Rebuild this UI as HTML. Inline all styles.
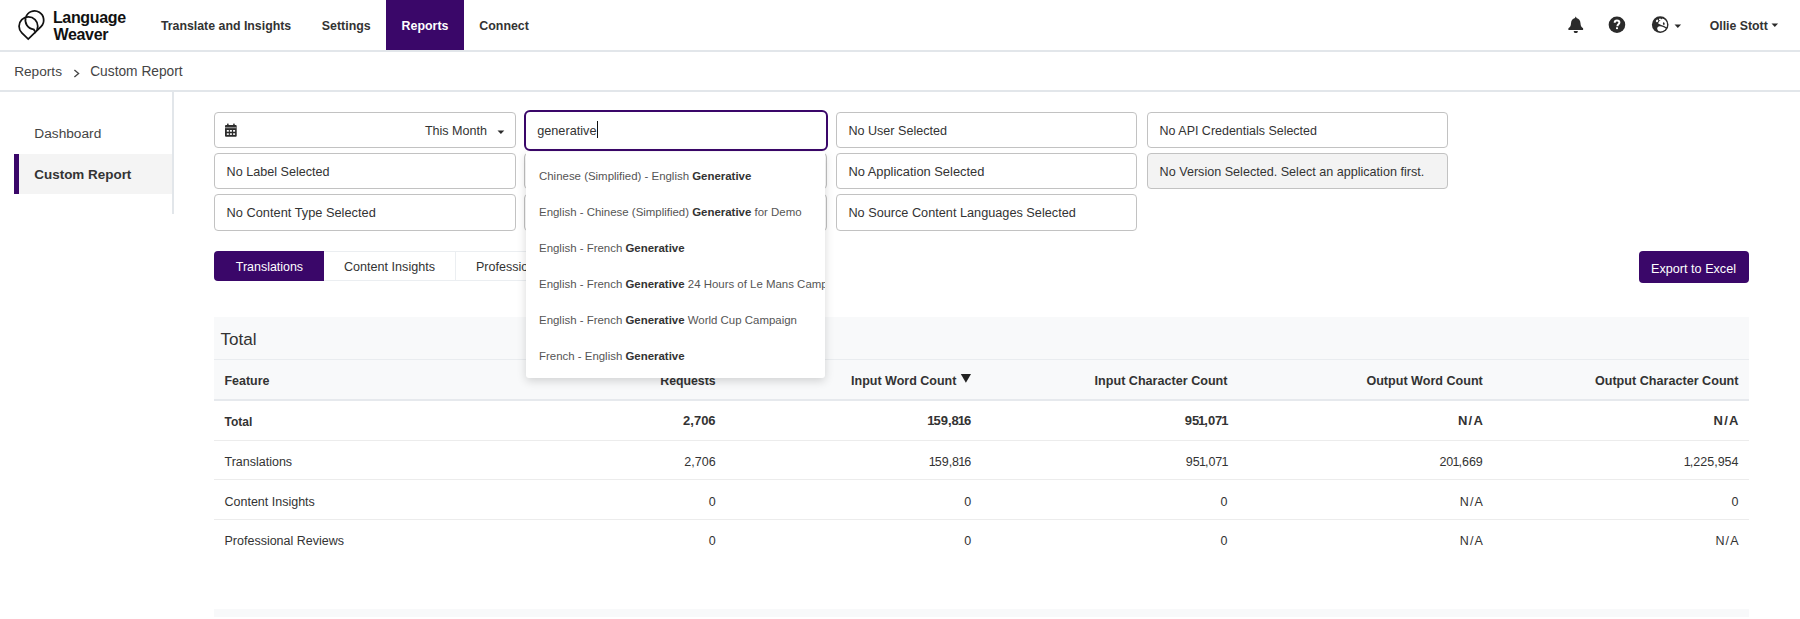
<!DOCTYPE html>
<html><head><meta charset="utf-8"><title>Custom Report</title>
<style>
html,body{margin:0;padding:0;background:#fff;width:1800px;height:619px;overflow:hidden;position:relative}
body{font-family:"Liberation Sans",sans-serif}
.t{position:absolute;white-space:pre;line-height:20px}
b{font-weight:700}
</style></head><body>
<div style="position:absolute;left:0px;top:50px;width:1800px;height:2px;background:#e2e6ea"></div>
<svg style="position:absolute;left:0;top:0" width="50" height="50" viewBox="0 0 50 50">
<g fill="none" stroke="#111" stroke-width="1.85" stroke-linejoin="miter" transform="translate(31 24.6) scale(0.955) translate(-31 -25)">
<path d="M33.9 29.9 A9.6 9.6 0 1 1 41.5 27.1 L28.1 40.1 L21.4 33.6 A9.8 9.8 0 1 1 35.2 33.6"/>
<path d="M33.6 29.6 L35.3 32.3"/>
</g></svg>
<div class="t" style="left:52.90px;top:7.55px;font-size:16.0px;font-weight:700;color:#111;letter-spacing:-0.33px;">Language</div>
<div class="t" style="left:53.50px;top:24.55px;font-size:16.0px;font-weight:700;color:#111;letter-spacing:-0.33px;">Weaver</div>
<div style="position:absolute;left:386px;top:0px;width:78px;height:50px;background:#3a0769"></div>
<div class="t" style="left:160.90px;top:15.52px;font-size:12.35px;font-weight:700;color:#333;">Translate and Insights</div>
<div class="t" style="left:321.80px;top:15.50px;font-size:12.4px;font-weight:700;color:#333;">Settings</div>
<div class="t" style="left:401.60px;top:15.50px;font-size:12.4px;font-weight:700;color:#fff;">Reports</div>
<div class="t" style="left:479.30px;top:15.70px;font-size:12.4px;font-weight:700;color:#333;">Connect</div>
<svg style="position:absolute;left:1566px;top:14px" width="20" height="22" viewBox="0 0 20 22">
<path fill="#2b2b2b" d="M9.75 2.5 C10.2 3.1 10.4 3.6 10.5 4.1 C12.9 4.6 14.3 6.6 14.5 9.3 C14.7 12.1 15.1 13.1 17.1 14.3 V15.9 H2.4 V14.3 C4.4 13.1 4.8 12.1 5.0 9.3 C5.2 6.6 6.6 4.6 9.0 4.1 C9.1 3.6 9.3 3.1 9.75 2.5z"/>
<path fill="#2b2b2b" d="M7.8 17.1 H11.8 V17.5 C11.8 18.5 10.9 19.1 9.8 19.1 C8.7 19.1 7.8 18.5 7.8 17.5z"/>
</svg>
<svg style="position:absolute;left:1607px;top:15px" width="20" height="20" viewBox="0 0 20 20">
<circle cx="9.95" cy="9.75" r="8.3" fill="#2b2b2b"/>
<path fill="none" stroke="#fff" stroke-width="2.0" d="M7.7 7.7 C7.7 6.2 8.7 5.4 9.95 5.4 C11.4 5.4 12.4 6.3 12.4 7.5 C12.4 9.3 10.4 9.2 10.4 11.2"/>
<rect x="9.0" y="12.3" width="2.0" height="1.8" fill="#fff"/>
</svg>
<svg style="position:absolute;left:1650px;top:15px" width="20" height="20" viewBox="0 0 20 20">
<defs><clipPath id="gc"><circle cx="10.2" cy="9.65" r="6.9"/></clipPath></defs>
<circle cx="10.2" cy="9.65" r="8.3" fill="#2b2b2b"/>
<g clip-path="url(#gc)" fill="#fff">
<ellipse cx="7.1" cy="5.9" rx="1.1" ry="1.3" transform="rotate(35 7.1 5.9)"/>
<ellipse cx="10.0" cy="4.4" rx="1.1" ry="0.9"/>
<path d="M8.2 8.0 C8.6 6.9 9.4 6.0 10.2 5.4 C11.0 4.7 11.6 3.9 12.4 3.6 C13.8 3.9 15.2 4.6 16.2 5.8 C17.0 7.0 17.6 8.4 17.6 10 C17.4 11.2 17.0 12.0 16.6 12.5 C15.8 11.8 15.0 11.2 14.2 10.9 C13.2 10.5 12.2 10.2 11.2 9.9 C10.2 9.6 9.2 9.2 8.6 8.8 C8.3 8.5 8.2 8.3 8.2 8.0z"/>
<path d="M7.6 12.2 C8.3 11.5 9.1 11.1 10.0 11.2 C11.0 11.3 12.1 11.6 13.1 12.1 C14.2 12.5 15.2 13.0 16.2 13.7 L15 17 C13 17.5 11 17.3 9.2 16.6 C8.2 16.0 7.6 15.2 7.3 14.3 C7.1 13.6 7.2 12.8 7.6 12.2z"/>
</g>
<path fill="#2b2b2b" d="M13.2 7.4 C13.8 7.1 14.4 7.6 14.6 8.3 C14.8 9.0 14.6 9.9 14.1 10.2 C13.5 10.2 13.2 9.7 13.0 9.0 C12.8 8.4 12.8 7.8 13.2 7.4z"/>
</svg>
<svg style="position:absolute;left:1673.5px;top:24px" width="8" height="5" viewBox="0 0 8 5"><path d="M0.5 0.4 H7.1 L3.8 3.9z" fill="#2b2b2b"/></svg>
<div class="t" style="left:1709.70px;top:16.04px;font-size:12.3px;font-weight:700;color:#333;">Ollie Stott</div>
<svg style="position:absolute;left:1770.8px;top:22.8px" width="8" height="5" viewBox="0 0 8 5"><path d="M0.5 0.4 H7.1 L3.8 3.9z" fill="#2b2b2b"/></svg>
<div style="position:absolute;left:0px;top:90px;width:1800px;height:2px;background:#e2e6ea"></div>
<div class="t" style="left:14.20px;top:61.67px;font-size:13.65px;font-weight:400;color:#444;">Reports</div>
<svg style="position:absolute;left:72px;top:67.5px" width="10" height="11" viewBox="0 0 10 11"><path d="M2.4 2.1 L6.6 5.5 L2.4 8.9" fill="none" stroke="#444" stroke-width="1.3"/></svg>
<div class="t" style="left:90.20px;top:61.63px;font-size:13.75px;font-weight:400;color:#444;">Custom Report</div>
<div style="position:absolute;left:172px;top:92px;width:2px;height:122px;background:#e2e6ea"></div>
<div style="position:absolute;left:19px;top:154px;width:153px;height:40px;background:#f4f4f4"></div>
<div style="position:absolute;left:14px;top:154px;width:5px;height:40px;background:#3a0769"></div>
<div class="t" style="left:34.30px;top:124.05px;font-size:13.7px;font-weight:400;color:#444;">Dashboard</div>
<div class="t" style="left:34.30px;top:164.64px;font-size:13.45px;font-weight:700;color:#333;">Custom Report</div>
<div style="position:absolute;left:214px;top:112px;width:302px;height:36px;box-sizing:border-box;border:1px solid #c2c2c2;border-radius:4px;background:#fff"></div>
<div style="position:absolute;left:836px;top:112px;width:301px;height:36px;box-sizing:border-box;border:1px solid #c2c2c2;border-radius:4px;background:#fff"></div>
<div style="position:absolute;left:1147px;top:112px;width:301px;height:36px;box-sizing:border-box;border:1px solid #c2c2c2;border-radius:4px;background:#fff"></div>
<div style="position:absolute;left:214px;top:153px;width:302px;height:36px;box-sizing:border-box;border:1px solid #c2c2c2;border-radius:4px;background:#fff"></div>
<div style="position:absolute;left:524px;top:153px;width:303px;height:36px;box-sizing:border-box;border:1px solid #c2c2c2;border-radius:4px;background:#fff"></div>
<div style="position:absolute;left:836px;top:153px;width:301px;height:36px;box-sizing:border-box;border:1px solid #c2c2c2;border-radius:4px;background:#fff"></div>
<div style="position:absolute;left:1147px;top:153px;width:301px;height:36px;box-sizing:border-box;border:1px solid #c2c2c2;border-radius:4px;background:#f3f3f3"></div>
<div style="position:absolute;left:214px;top:194px;width:302px;height:37px;box-sizing:border-box;border:1px solid #c2c2c2;border-radius:4px;background:#fff"></div>
<div style="position:absolute;left:524px;top:194px;width:303px;height:37px;box-sizing:border-box;border:1px solid #c2c2c2;border-radius:4px;background:#fff"></div>
<div style="position:absolute;left:836px;top:194px;width:301px;height:37px;box-sizing:border-box;border:1px solid #c2c2c2;border-radius:4px;background:#fff"></div>
<div style="position:absolute;left:524px;top:110px;width:303.5px;height:40.5px;box-sizing:border-box;border:2px solid #3a0769;border-radius:6px;background:#fff"></div>
<svg style="position:absolute;left:224px;top:122px" width="14" height="16" viewBox="0 0 14 16">
<rect x="1" y="3.0" width="11.7" height="11.7" rx="1" fill="#2b2b2b"/>
<rect x="3.1" y="1.6" width="1.5" height="2.2" rx="0.5" fill="#2b2b2b"/><rect x="9.2" y="1.6" width="1.5" height="2.2" rx="0.5" fill="#2b2b2b"/>
<rect x="1" y="4.9" width="11.7" height="1.4" fill="#8a8a8a"/>
<g fill="#fff"><rect x="2.8" y="8.0" width="2" height="1.7"/><rect x="5.9" y="8.0" width="2" height="1.7"/><rect x="9.1" y="8.0" width="2" height="1.7"/>
<rect x="2.8" y="11.3" width="2" height="1.6"/><rect x="5.9" y="11.3" width="2" height="1.6"/><rect x="9.1" y="11.3" width="2" height="1.6"/></g>
</svg>
<div class="t" style="left:424.90px;top:121.34px;font-size:12.57px;font-weight:400;color:#333;">This Month</div>
<svg style="position:absolute;left:497px;top:129.5px" width="8" height="5" viewBox="0 0 8 5"><path d="M0.5 0.4 H7.3 L3.9 4z" fill="#2b2b2b"/></svg>
<div class="t" style="left:537.20px;top:120.80px;font-size:12.7px;font-weight:400;color:#333;">generative</div>
<div style="position:absolute;left:597px;top:121px;width:1.2px;height:17px;background:#111"></div>
<div class="t" style="left:848.40px;top:121.34px;font-size:12.58px;font-weight:400;color:#333;">No User Selected</div>
<div class="t" style="left:1159.60px;top:121.38px;font-size:12.47px;font-weight:400;color:#333;">No API Credentials Selected</div>
<div class="t" style="left:226.60px;top:162.03px;font-size:12.6px;font-weight:400;color:#333;">No Label Selected</div>
<div class="t" style="left:848.40px;top:161.93px;font-size:12.88px;font-weight:400;color:#333;">No Application Selected</div>
<div class="t" style="left:1159.60px;top:162.03px;font-size:12.6px;font-weight:400;color:#333;">No Version Selected. Select an application first.</div>
<div class="t" style="left:226.60px;top:203.16px;font-size:12.8px;font-weight:400;color:#333;">No Content Type Selected</div>
<div class="t" style="left:848.40px;top:203.19px;font-size:12.71px;font-weight:400;color:#333;">No Source Content Languages Selected</div>
<div style="position:absolute;left:214px;top:251px;width:560px;height:30px;box-sizing:border-box;border:1px solid #ebeef1;border-radius:4px;background:#fff"></div>
<div style="position:absolute;left:455px;top:251px;width:1px;height:30px;background:#ebeef1"></div>
<div style="position:absolute;left:214px;top:251px;width:110px;height:30px;background:#3a0769;border-radius:4px 0 0 4px"></div>
<div class="t" style="left:235.80px;top:256.88px;font-size:12.45px;font-weight:400;color:#fff;">Translations</div>
<div class="t" style="left:344.00px;top:256.83px;font-size:12.6px;font-weight:400;color:#333;">Content Insights</div>
<div class="t" style="left:476.00px;top:256.87px;font-size:12.5px;font-weight:400;color:#333;">Professional Reviews</div>
<div style="position:absolute;left:1639px;top:251px;width:110px;height:32px;background:#3a0769;border-radius:4px"></div>
<div class="t" style="left:1651.10px;top:258.52px;font-size:12.64px;font-weight:400;color:#fff;">Export to Excel</div>
<div style="position:absolute;left:214px;top:317px;width:1535px;height:83px;background:#f8f9fa"></div>
<div style="position:absolute;left:214px;top:358.5px;width:1535px;height:1px;background:#e9ecef"></div>
<div style="position:absolute;left:214px;top:399px;width:1535px;height:2px;background:#e6e9ed"></div>
<div style="position:absolute;left:214px;top:440px;width:1535px;height:1px;background:#ececec"></div>
<div style="position:absolute;left:214px;top:479px;width:1535px;height:1px;background:#ececec"></div>
<div style="position:absolute;left:214px;top:519px;width:1535px;height:1px;background:#ececec"></div>
<div style="position:absolute;left:214px;top:609px;width:1535px;height:8px;background:#f8f9fa"></div>
<div class="t" style="left:220.40px;top:329.57px;font-size:17.1px;font-weight:400;color:#333;">Total</div>
<div class="t" style="left:224.50px;top:371.08px;font-size:12.46px;font-weight:700;color:#333;">Feature</div>
<div class="t" style="right:1084.40px;top:371.14px;font-size:12.3px;font-weight:700;color:#333;">Requests</div>
<div class="t" style="right:843.60px;top:371.07px;font-size:12.5px;font-weight:700;color:#333;">Input Word Count</div>
<svg style="position:absolute;left:960px;top:373px" width="12" height="11" viewBox="0 0 12 11"><path d="M0.8 1 H11 L5.9 9.8z" fill="#222"/></svg>
<div class="t" style="right:572.50px;top:371.03px;font-size:12.6px;font-weight:700;color:#333;">Input Character Count</div>
<div class="t" style="right:317.20px;top:371.04px;font-size:12.58px;font-weight:700;color:#333;">Output Word Count</div>
<div class="t" style="right:61.50px;top:371.02px;font-size:12.62px;font-weight:700;color:#333;">Output Character Count</div>
<div class="t" style="left:224.50px;top:411.74px;font-size:12.0px;font-weight:700;color:#333;">Total</div>
<div class="t" style="right:1084.40px;top:411.39px;font-size:13.0px;font-weight:700;color:#333;">2,706</div>
<div class="t" style="right:828.80px;top:411.39px;font-size:13.0px;font-weight:700;color:#333;"><span style="margin:0 -1.05px">1</span>59,8<span style="margin:0 -1.05px">1</span>6</div>
<div class="t" style="right:572.50px;top:411.39px;font-size:13.0px;font-weight:700;color:#333;">95<span style="margin:0 -1.05px">1</span>,07<span style="margin:0 -1.05px">1</span></div>
<div class="t" style="right:317.20px;top:411.39px;font-size:13.0px;font-weight:700;color:#333;">N<span style="margin:0 1.25px">/</span>A</div>
<div class="t" style="right:61.50px;top:411.39px;font-size:13.0px;font-weight:700;color:#333;">N<span style="margin:0 1.25px">/</span>A</div>
<div class="t" style="left:224.50px;top:451.77px;font-size:12.5px;font-weight:400;color:#333;">Translations</div>
<div class="t" style="right:1084.40px;top:451.77px;font-size:12.5px;font-weight:400;color:#333;">2,706</div>
<div class="t" style="right:828.80px;top:451.77px;font-size:12.5px;font-weight:400;color:#333;"><span style="margin:0 -0.9px">1</span>59,8<span style="margin:0 -0.9px">1</span>6</div>
<div class="t" style="right:572.50px;top:451.77px;font-size:12.5px;font-weight:400;color:#333;">95<span style="margin:0 -0.9px">1</span>,07<span style="margin:0 -0.9px">1</span></div>
<div class="t" style="right:317.20px;top:451.77px;font-size:12.5px;font-weight:400;color:#333;">20<span style="margin:0 -0.9px">1</span>,669</div>
<div class="t" style="right:61.50px;top:451.77px;font-size:12.5px;font-weight:400;color:#333;"><span style="margin:0 -0.9px">1</span>,225,954</div>
<div class="t" style="left:224.50px;top:491.57px;font-size:12.5px;font-weight:400;color:#333;">Content Insights</div>
<div class="t" style="right:1084.40px;top:491.57px;font-size:12.5px;font-weight:400;color:#333;">0</div>
<div class="t" style="right:828.80px;top:491.57px;font-size:12.5px;font-weight:400;color:#333;">0</div>
<div class="t" style="right:572.50px;top:491.57px;font-size:12.5px;font-weight:400;color:#333;">0</div>
<div class="t" style="right:317.20px;top:491.57px;font-size:12.5px;font-weight:400;color:#333;">N<span style="margin:0 1.1px">/</span>A</div>
<div class="t" style="right:61.50px;top:491.57px;font-size:12.5px;font-weight:400;color:#333;">0</div>
<div class="t" style="left:224.50px;top:530.87px;font-size:12.5px;font-weight:400;color:#333;">Professional Reviews</div>
<div class="t" style="right:1084.40px;top:530.87px;font-size:12.5px;font-weight:400;color:#333;">0</div>
<div class="t" style="right:828.80px;top:530.87px;font-size:12.5px;font-weight:400;color:#333;">0</div>
<div class="t" style="right:572.50px;top:530.87px;font-size:12.5px;font-weight:400;color:#333;">0</div>
<div class="t" style="right:317.20px;top:530.87px;font-size:12.5px;font-weight:400;color:#333;">N<span style="margin:0 1.1px">/</span>A</div>
<div class="t" style="right:61.50px;top:530.87px;font-size:12.5px;font-weight:400;color:#333;">N<span style="margin:0 1.1px">/</span>A</div>
<div style="position:absolute;left:526px;top:151.5px;width:299px;height:226px;background:#fff;border-radius:0 0 3px 3px;box-shadow:0 3px 10px rgba(0,0,0,0.16);overflow:hidden"><div class="t" style="left:13px;top:14.83px;font-size:11.45px;color:#555">Chinese (Simplified) - English <b style="color:#333">Generative</b></div><div class="t" style="left:13px;top:50.83px;font-size:11.45px;color:#555">English - Chinese (Simplified) <b style="color:#333">Generative</b> for Demo</div><div class="t" style="left:13px;top:86.83px;font-size:11.45px;color:#555">English - French <b style="color:#333">Generative</b></div><div class="t" style="left:13px;top:122.83px;font-size:11.45px;color:#555">English - French <b style="color:#333">Generative</b> 24 Hours of Le Mans Campaign</div><div class="t" style="left:13px;top:158.83px;font-size:11.45px;color:#555">English - French <b style="color:#333">Generative</b> World Cup Campaign</div><div class="t" style="left:13px;top:194.83px;font-size:11.45px;color:#555">French - English <b style="color:#333">Generative</b></div></div>
</body></html>
